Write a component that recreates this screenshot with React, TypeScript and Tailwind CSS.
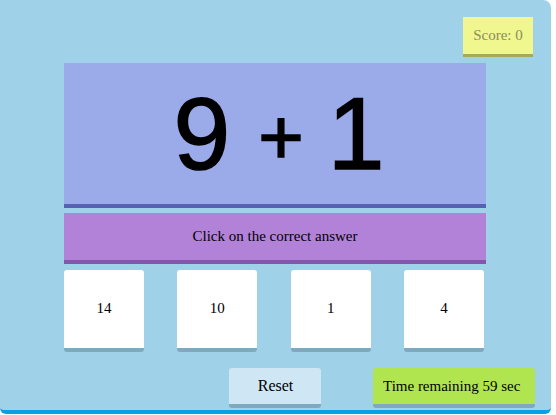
const answers = [14, 10, 1, 4];

const App = () => {
  return (
    <div className="w-[551px] h-[414px] bg-[#9fd2e9] rounded-tr-lg rounded-b-md border-b-4 border-[#0a9fe3] font-['Liberation_Serif',serif] text-[15px] text-black">
      <div className="flex justify-end pt-[17px] pr-[18px]">
        <div className="w-[70px] h-[40px] bg-[#f0f78e] border-b-[3px] border-[#a3aa5b] flex items-center justify-center text-[#8c8c60]">
          Score: 0
        </div>
      </div>

      <div className="ml-[64px] mt-[6px] w-[422px]">
        <div className="h-[145px] bg-[#9baae8] border-b-4 border-[#5661b3] flex items-center justify-center pl-[8px] font-['Liberation_Sans',sans-serif] leading-none [-webkit-text-stroke:1.5px_black]">
          <span className="text-[102px]">9</span>
          <span className="text-[78px] ml-[28px] mt-[6px]">+</span>
          <span className="text-[102px] ml-[24px]">1</span>
        </div>

        <div className="mt-[5px] h-[51px] bg-[#b282d8] border-b-4 border-[#8457ac] flex items-center justify-center">
          Click on the correct answer
        </div>

        <div className="mt-[6px] w-[420px] flex justify-between">
          {answers.map((a) => (
            <button
              key={a}
              className="w-[80px] h-[82px] bg-white rounded-[3px] border-b-4 border-[#7fa9c1] flex items-center justify-center pb-[2px]">
              {a}
            </button>
          ))}
        </div>
      </div>

      <div className="mt-[16px] grid grid-cols-3">
        <div></div>
        <div className="flex justify-center">
          <button className="w-[92px] h-[40px] bg-[#cfe6f4] rounded-[3px] border-b-4 border-[#7fa9c1] text-[16px]">
            Reset
          </button>
        </div>
        <div className="flex justify-end pr-[16px]">
          <button className="w-[162px] h-[40px] bg-[#b1e54f] rounded-[3px] border-b-4 border-[#7fa9c1] pl-[10px] text-left text-[15px]">
            Time remaining 59 sec
          </button>
        </div>
      </div>
    </div>
  );
};

export default App;
